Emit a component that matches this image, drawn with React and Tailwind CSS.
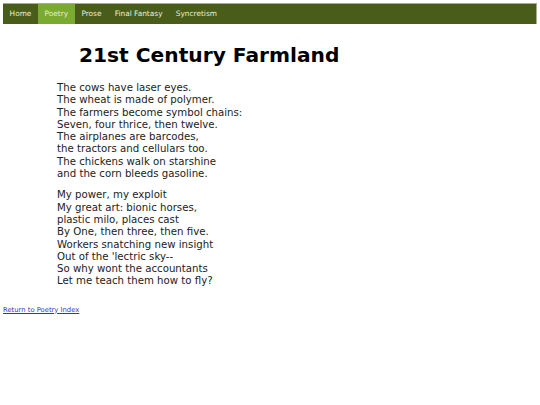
const navItems = ['Home', 'Poetry', 'Prose', 'Final Fantasy', 'Syncretism'];

const stanzas = [
  [
    'The cows have laser eyes.',
    'The wheat is made of polymer.',
    'The farmers become symbol chains:',
    'Seven, four thrice, then twelve.',
    'The airplanes are barcodes,',
    'the tractors and cellulars too.',
    'The chickens walk on starshine',
    'and the corn bleeds gasoline.',
  ],
  [
    'My power, my exploit',
    'My great art: bionic horses,',
    'plastic milo, places cast',
    'By One, then three, then five.',
    'Workers snatching new insight',
    "Out of the 'lectric sky--",
    'So why wont the accountants',
    'Let me teach them how to fly?',
  ],
];

export default function App() {
  return (
    <div className="w-[540px] h-[405px] bg-white font-['DejaVu_Sans',sans-serif] pt-[3px]">
      <nav className="mx-[3px] flex h-[21px] bg-[#4a5c1a] border-t border-r border-[#a3ad8a]">
        {navItems.map((item) => (
          <a
            key={item}
            className={`flex items-center px-[6.6px] text-[7.4px] text-[#e8eed8] ${
              item === 'Poetry' ? 'bg-[#7aaa2f]' : ''
            }`}
          >
            {item}
          </a>
        ))}
      </nav>

      <h1 className="mt-[18px] pl-[79px] text-[20.2px] font-bold leading-[27px] text-black">
        21st Century Farmland
      </h1>

      <div className="mt-[13px] pl-[57px] text-[10.2px] leading-[12.3px] text-[#222]">
        {stanzas.map((stanza, i) => (
          <p key={i} className="mb-[9px]">
            {stanza.map((line) => (
              <span key={line} className="block">
                {line}
              </span>
            ))}
          </p>
        ))}
      </div>

      <a href="#" className="block mt-[17px] ml-[3px] text-[6.8px] text-[#3333cc] underline">
        Return to Poetry Index
      </a>
    </div>
  );
}
